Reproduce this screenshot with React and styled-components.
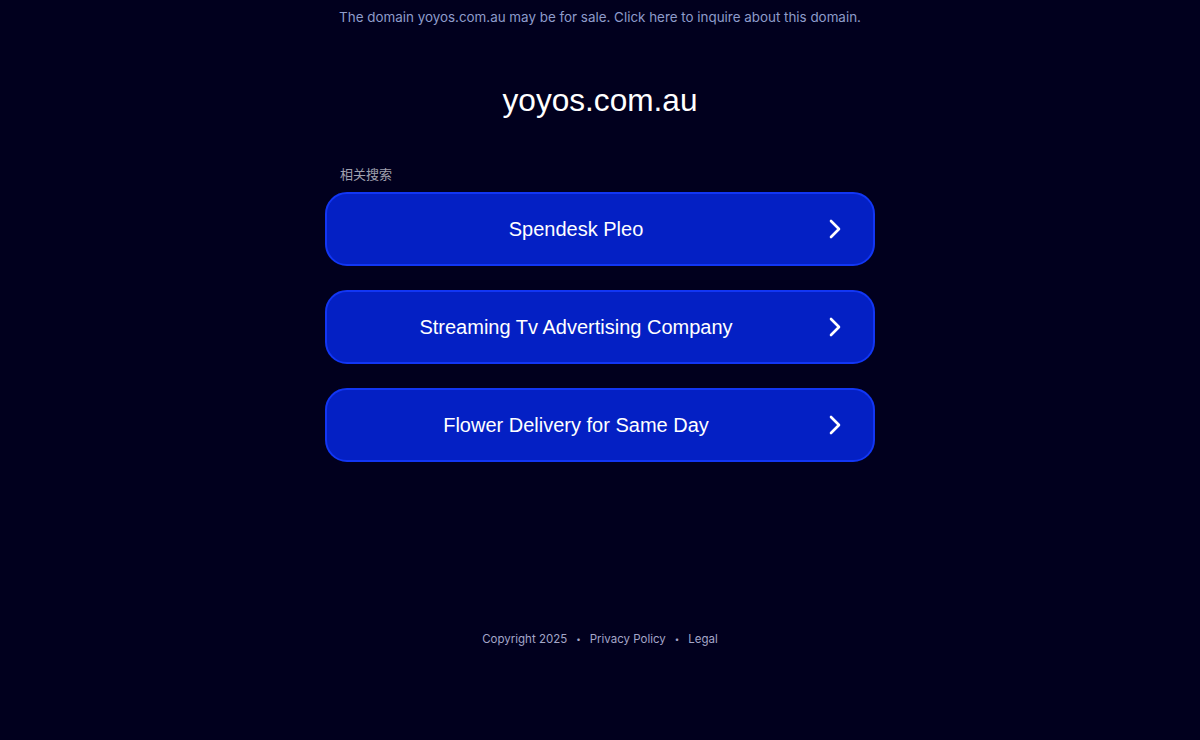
import React from "react";
import styled, { createGlobalStyle } from "styled-components";

const GlobalStyle = createGlobalStyle`
  html, body {
    margin: 0;
    padding: 0;
    background: #01001e;
  }
  body {
    font-family: "Liberation Sans", Arial, sans-serif;
  }
`;

const links = [
  "Spendesk Pleo",
  "Streaming Tv Advertising Company",
  "Flower Delivery for Same Day",
];

const Chevron = () => (
  <svg width="18" height="22" viewBox="0 0 18 22" fill="none">
    <path
      d="M5 3 L13 11 L5 19"
      stroke="#ffffff"
      strokeWidth="2.6"
      strokeLinecap="round"
      strokeLinejoin="round"
    />
  </svg>
);

export default function App() {
  return (
    <Page>
      <GlobalStyle />
      <TopBar href="#">
        The domain yoyos.com.au may be for sale. Click here to inquire about this domain.
      </TopBar>
      <Title>yoyos.com.au</Title>
      <Results>
        <Label>相关搜索</Label>
        <List>
          {links.map((text) => (
            <LinkButton key={text} href="#">
              <ButtonText>{text}</ButtonText>
              <Arrow>
                <Chevron />
              </Arrow>
            </LinkButton>
          ))}
        </List>
      </Results>
      <Footer>
        <FooterLink href="#">Copyright 2025</FooterLink>
        <Dot>•</Dot>
        <FooterLink href="#">Privacy Policy</FooterLink>
        <Dot>•</Dot>
        <FooterLink href="#">Legal</FooterLink>
      </Footer>
    </Page>
  );
}

const Page = styled.div`
  min-height: 740px;
  display: flex;
  flex-direction: column;
  align-items: center;
`;

const TopBar = styled.a`
  display: block;
  padding-top: 9px;
  font-family: Inter, "Noto Sans", sans-serif;
  font-size: 13.4px;
  line-height: 16px;
  color: #8e9ccb;
  text-decoration: none;
`;

const Title = styled.h1`
  margin: 57px 0 0;
  font-family: "Liberation Sans", Arial, sans-serif;
  font-weight: 400;
  font-size: 31.6px;
  line-height: 36px;
  color: #ffffff;
`;

const Results = styled.div`
  width: 550px;
  margin-top: 49px;
`;

const Label = styled.div`
  padding-left: 15px;
  font-family: "Liberation Sans", "Noto Sans CJK SC", sans-serif;
  font-size: 13px;
  line-height: 16px;
  color: #a0a0ae;
  margin-bottom: 9px;
`;

const List = styled.div`
  display: flex;
  flex-direction: column;
  gap: 24px;
`;

const LinkButton = styled.a`
  position: relative;
  box-sizing: border-box;
  height: 74px;
  display: flex;
  align-items: center;
  padding-right: 48px;
  background: #0420c4;
  border: 2px solid #1236f4;
  border-radius: 22px;
  color: #ffffff;
  text-decoration: none;
`;

const ButtonText = styled.span`
  flex: 1;
  text-align: center;
  font-family: "Liberation Sans", Arial, sans-serif;
  font-size: 20px;
`;

const Arrow = styled.span`
  position: absolute;
  right: 29px;
  top: 50%;
  transform: translateY(-50%);
  display: flex;
`;

const Footer = styled.div`
  margin-top: 169px;
  display: flex;
  align-items: center;
  gap: 9px;
  font-family: Inter, "Noto Sans", sans-serif;
  font-size: 11.5px;
  line-height: 16px;
  color: #a4a6c8;
`;

const FooterLink = styled.a`
  color: #a4a6c8;
  text-decoration: none;
`;

const Dot = styled.span`
  font-size: 8px;
`;
